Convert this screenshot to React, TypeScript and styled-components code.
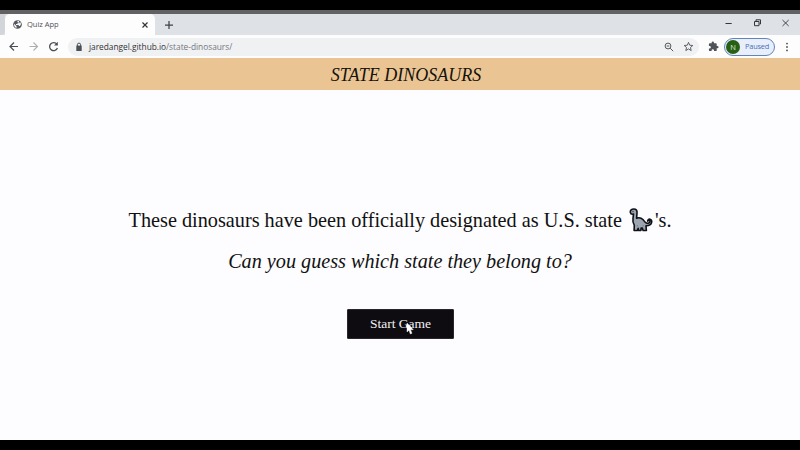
import React from "react";
import styled, { createGlobalStyle } from "styled-components";

const GlobalStyle = createGlobalStyle`
  * { box-sizing: border-box; }
  body { margin: 0; background: #000; overflow: hidden; }
`;

const Screen = styled.div`
  width: 800px;
  height: 450px;
  padding: 10px 0;
  display: flex;
  flex-direction: column;
  background: #000;
  font-family: "Open Sans", "Noto Sans", sans-serif;
`;

const TabStrip = styled.div`
  flex: none;
  height: 25px;
  display: flex;
  align-items: flex-end;
  background: #dee1e6;
  border-top: 4px solid #626264;
`;

const PreviousTab = styled.div`
  width: 5px;
  height: 21px;
  background: #d2d5da;
  border-radius: 0 0 4px 0;
`;

const Tab = styled.div`
  width: 150px;
  height: 21px;
  padding: 0 5px 0 8px;
  display: flex;
  align-items: center;
  background: #fdfdfe;
  border-radius: 5px 5px 0 0;
`;

const TabTitle = styled.span`
  flex: 1;
  margin: -1px 0 0 5px;
  font-size: 7.6px;
  line-height: 12px;
  letter-spacing: -0.05px;
  color: #505357;
`;

const NewTab = styled.div`
  width: 28px;
  height: 21px;
  display: flex;
  align-items: center;
  justify-content: center;
`;

const WindowControls = styled.div`
  margin-left: auto;
  height: 21px;
  display: flex;
  align-items: center;
  gap: 20.5px;
  padding: 0 10px 3px 0;
`;

const Toolbar = styled.div`
  flex: none;
  height: 23px;
  display: flex;
  align-items: center;
  background: #fdfdfe;
  padding-left: 8px;
`;

const NavButtons = styled.div`
  width: 60px;
  display: flex;
  gap: 9px;
`;

const AddressBar = styled.div`
  width: 631px;
  height: 18px;
  display: flex;
  align-items: center;
  padding: 0 5px 0 7px;
  background: #f0f1f3;
  border-radius: 9px;
`;

const Url = styled.span`
  flex: 1;
  margin-left: 6px;
  font-size: 8.35px;
  line-height: 14px;
  letter-spacing: -0.02px;
  color: #75787c;
`;

const Host = styled.span`
  color: #303236;
`;

const AddressActions = styled.div`
  display: flex;
  align-items: center;
  gap: 9px;
`;

const ExtensionSlot = styled.div`
  width: 25px;
  display: flex;
  justify-content: center;
  padding-left: 3px;
`;

const Profile = styled.div`
  width: 51px;
  height: 18px;
  display: flex;
  align-items: center;
  padding-left: 1px;
  background: #e9effa;
  border: 1px solid #6184be;
  border-radius: 9px;
`;

const Avatar = styled.span`
  width: 14px;
  height: 14px;
  border-radius: 50%;
  background: #286013;
  color: #dfe9d9;
  font-size: 7.5px;
  line-height: 14px;
  text-align: center;
`;

const ProfileState = styled.span`
  margin-left: 5px;
  font-size: 7.4px;
  line-height: 13px;
  letter-spacing: -0.2px;
  color: #4770b8;
`;

const MenuSlot = styled.div`
  width: 24px;
  display: flex;
  justify-content: center;
`;

const Header = styled.header`
  flex: none;
  height: 32px;
  display: flex;
  justify-content: center;
  padding-left: 12px;
  background: #eac593;
`;

const Title = styled.h1`
  margin: 0;
  font: italic 400 18px/34px "Liberation Serif", serif;
  color: #16120d;
`;

const Page = styled.main`
  flex: 1;
  display: flex;
  flex-direction: column;
  align-items: center;
  padding-top: 115px;
  background: #fdfcfe;
  color: #111;
  font-family: "Liberation Serif", serif;
`;

const Intro = styled.p`
  margin: 0;
  height: 30px;
  display: flex;
  align-items: center;
  font-size: 20.25px;
  line-height: 30px;
  white-space: nowrap;
`;

const Question = styled.p`
  margin: 11px 0 0;
  font-size: 20.2px;
  line-height: 30px;
  font-style: italic;
  white-space: nowrap;
`;

const StartButton = styled.button`
  position: relative;
  width: 107px;
  height: 30px;
  margin: 33px 0 0 1px;
  padding: 0;
  border: 1px solid #29272b;
  border-radius: 1px;
  background: #0e0c10;
  color: #f1f0f2;
  font: 13.5px/28px "Liberation Serif", serif;
`;

const Pointer = styled.svg`
  position: absolute;
  left: 58px;
  top: 12px;
`;

const DinoIcon = styled.svg`
  margin: 0 2px 0 7px;
`;

function Globe() {
  return (
    <svg width="9" height="9" viewBox="0 0 18 18">
      <circle cx="9" cy="9" r="8.7" fill="#55595e" />
      <path d="M2 7.5 7 12v4C4 15 2 12 2 9zM8 2h4v2.5L9 6v2H6v2h5l1 2h2c3-3 2-7 0-8l-2 3" fill="#f6f7f8" />
    </svg>
  );
}

function Dinosaur() {
  return (
    <DinoIcon width="24" height="24" viewBox="0 0 24 24">
      <path
        d="M1.3 4.3C1 2.4 2.6 1 4.8 1 7.2 1 8.3 2.6 8 5l-.4 5.2c2-.8 4.8-.2 6.3 1.3 1.2 1.2 2 3.1 3.6 3.6 1.6.5 3.4-.4 3.5-1.6 0-1.1-1.3-1.3-2.4-.4.1-1.4 1.2-2.2 2.4-1.9 1.3.3 2.1 1.6 1.6 3.3-.6 2.2-2.8 3.3-5.6 3.2l.4 4.8h-3.3l-.8-2.4h-1.2l-.2 2.4H9.5l-.3-2.3-.9 2.3H5.1l.2-5.2c-1.2-1.6-1.7-4-1.3-6.9l.5-4.3C3 6.4 1.6 5.7 1.3 4.3Z"
        fill="#9ba6b1"
        stroke="#101116"
        strokeWidth="1.6"
        strokeLinejoin="round"
      />
      <path d="M8.3 17v1.5M14.2 17v1.5" fill="none" stroke="#66717e" strokeWidth=".7" />
      <circle cx="4" cy="3.6" r=".6" fill="#15161a" />
    </DinoIcon>
  );
}

export default function App() {
  return (
    <Screen>
      <GlobalStyle />
      <TabStrip>
        <PreviousTab />
        <Tab>
          <Globe />
          <TabTitle>Quiz App</TabTitle>
          <svg width="10" height="10" viewBox="0 0 10 10" stroke="#333639" strokeWidth="1.2">
            <path d="m2.5 2.5 5 5m0-5-5 5" />
          </svg>
        </Tab>
        <NewTab>
          <svg width="8" height="8" viewBox="0 0 8 8" stroke="#3f4246" strokeWidth="1.25">
            <path d="M4 0v8M0 4h8" />
          </svg>
        </NewTab>
        <WindowControls>
          <svg width="8" height="8" viewBox="0 0 8 8" stroke="#34373b">
            <path d="M.5 4.5h6.2" />
          </svg>
          <svg width="8" height="8" viewBox="0 0 8 8" fill="none" stroke="#34373b">
            <path d="M.5 2.5H5v4.2H.5zM2 2V.8h4.5V5H5.5" />
          </svg>
          <svg width="8" height="8" viewBox="0 0 8 8" stroke="#34373b" strokeWidth=".9">
            <path d="m.5 1 6.2 6m0-6L.5 7" />
          </svg>
        </WindowControls>
      </TabStrip>

      <Toolbar>
        <NavButtons>
          <svg width="11" height="11" viewBox="0 0 11 11" fill="none" stroke="#4a4d51" strokeWidth="1.2">
            <path d="M10 5.5H2M6 1.5l-4 4 4 4" />
          </svg>
          <svg width="11" height="11" viewBox="0 0 11 11" fill="none" stroke="#adafb2" strokeWidth="1.1">
            <path d="M1.5 5.5h8M5.5 1.5l4 4-4 4" />
          </svg>
          <svg width="11" height="11" viewBox="0 0 11 11" fill="none" stroke="#4a4d51" strokeWidth="1.3">
            <path d="M8.8 3.2A4 4 0 1 0 9.4 7" />
            <path d="M9.8.8v3.7H6.1z" fill="#4a4d51" stroke="none" />
          </svg>
        </NavButtons>
        <AddressBar>
          <svg width="8" height="10" viewBox="0 0 8 10">
            <path d="M1.3 3.6h5.4V9H1.3z" fill="#4c4f53" />
            <path d="M2.4 4V2.7a1.6 1.6 0 0 1 3.2 0V4" fill="none" stroke="#4c4f53" />
          </svg>
          <Url><Host>jaredangel.github.io</Host>/state-dinosaurs/</Url>
          <AddressActions>
            <svg width="10" height="10" viewBox="0 0 10 10" fill="none" stroke="#55585d">
              <circle cx="4" cy="4" r="2.9" />
              <path d="m6.2 6.2 3 3M2.7 4h2.6" />
            </svg>
            <svg width="11" height="11" viewBox="0 0 24 24" fill="none" stroke="#505358" strokeWidth="2">
              <path d="m12 3 2.6 6.2 6.8.6-5.1 4.4 1.5 6.6-5.8-3.5-5.8 3.5 1.5-6.6-5.1-4.4 6.8-.6z" />
            </svg>
          </AddressActions>
        </AddressBar>
        <ExtensionSlot>
          <svg width="11" height="11" viewBox="0 0 24 24" fill="#505358">
            <path d="M20.5 11H19V7a2 2 0 0 0-2-2h-4V3.5a2.5 2.5 0 0 0-5 0V5H4a2 2 0 0 0-2 2v3.8h1.5a2.7 2.7 0 0 1 0 5.4H2V20a2 2 0 0 0 2 2h3.8v-1.5a2.7 2.7 0 0 1 5.4 0V22H17a2 2 0 0 0 2-2v-4h1.5a2.5 2.5 0 0 0 0-5" />
          </svg>
        </ExtensionSlot>
        <Profile>
          <Avatar>N</Avatar>
          <ProfileState>Paused</ProfileState>
        </Profile>
        <MenuSlot>
          <svg width="4" height="10" viewBox="0 0 4 10" fill="#4a4d51">
            <circle cx="2" cy="1.6" r=".9" />
            <circle cx="2" cy="5" r=".9" />
            <circle cx="2" cy="8.4" r=".9" />
          </svg>
        </MenuSlot>
      </Toolbar>

      <Header>
        <Title>STATE DINOSAURS</Title>
      </Header>
      <Page>
        <Intro>
          These dinosaurs have been officially designated as U.S. state
          <Dinosaur />
          's.
        </Intro>
        <Question>Can you guess which state they belong to?</Question>
        <StartButton>
          Start Game
          <Pointer width="8" height="13" viewBox="0 0 8 13">
            <path d="M1 1v9l2-1.8L4.3 12l1.7-.7-1.5-3.6h2.8z" fill="#fff" stroke="#fff" strokeWidth=".4" />
          </Pointer>
        </StartButton>
      </Page>
    </Screen>
  );
}
